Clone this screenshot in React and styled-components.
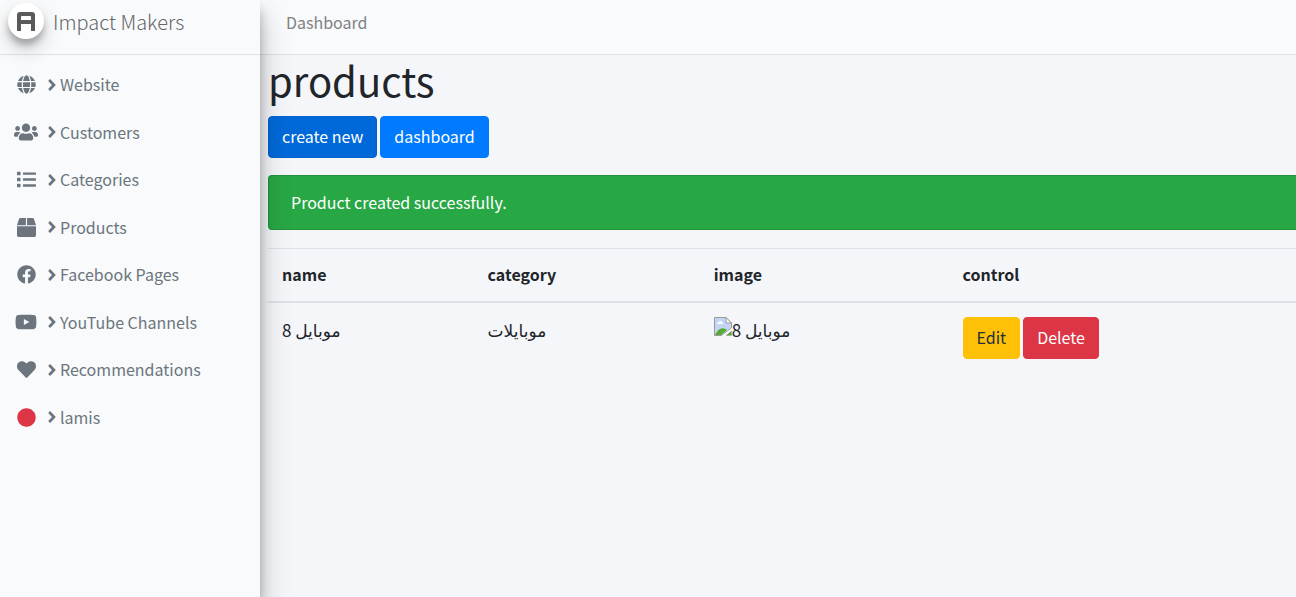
import React from "react";
import styled, { createGlobalStyle } from "styled-components";
import {
  FaGlobe,
  FaUsers,
  FaList,
  FaBox,
  FaFacebook,
  FaYoutube,
  FaHeart,
  FaCircle,
  FaAngleRight,
} from "react-icons/fa";

const GlobalStyle = createGlobalStyle`
  *, *::before, *::after { box-sizing: border-box; }
  body {
    margin: 0;
    background: #f4f6f9;
    color: #212529;
    font-family: "Noto Sans CJK SC", "Noto Sans", "DejaVu Sans", sans-serif;
    font-size: 16px;
    line-height: 27px;
  }
`;

const Layout = styled.div`
  display: flex;
  min-height: 100vh;
  overflow: hidden;
`;

const Sidebar = styled.aside`
  position: relative;
  z-index: 1;
  flex: 0 0 260px;
  background: #f8fafc;
  box-shadow: 0 14px 28px rgba(0, 0, 0, 0.25), 0 10px 10px rgba(0, 0, 0, 0.22);
`;

const Brand = styled.a`
  display: flex;
  align-items: center;
  gap: 9px;
  height: 55px;
  padding: 0 8px 12px;
  border-bottom: 1px solid #dee2e6;
  color: #666;
  font-size: 20px;
  font-weight: 300;
  text-decoration: none;
`;

const LogoDisc = styled.span`
  display: flex;
  align-items: center;
  justify-content: center;
  width: 36px;
  height: 36px;
  border-radius: 50%;
  background: #fff;
  box-shadow: 0 10px 20px rgba(0, 0, 0, 0.19), 0 6px 6px rgba(0, 0, 0, 0.23);
`;

const NavList = styled.ul`
  display: grid;
  grid-auto-rows: 1fr;
  min-height: 380px;
  margin: 6px 0 0;
  padding: 0;
  list-style: none;
`;

const NavLink = styled.a`
  display: flex;
  align-items: center;
  height: 100%;
  padding: 0 12px;
  color: #6c757d;
  text-decoration: none;
`;

const NavIcon = styled.span`
  display: flex;
  justify-content: center;
  width: 28px;
  margin-right: 6px;
  color: ${(p) => p.$color || "inherit"};
  font-size: ${(p) => p.$size}px;
`;

const Angle = styled(FaAngleRight)`
  width: 12px;
  height: 18px;
  margin-right: 2px;
`;

const Content = styled.div`
  flex: 1;
  min-width: 0;
`;

const Topbar = styled.header`
  height: 55px;
  padding: 9px 26px;
  border-bottom: 1px solid #dee2e6;
  background: #f8fafc;
`;

const TopLink = styled.a`
  color: #808182;
  text-decoration: none;
`;

const Main = styled.main`
  padding-left: 8px;
`;

const Title = styled.h1`
  margin: 0 0 11px;
  font-size: 40px;
  font-weight: 400;
  line-height: 50px;
`;

const ButtonRow = styled.div`
  display: flex;
  gap: 3px;
`;

const tones = {
  pressed: { bg: "#0069d9", line: "#0062cc", text: "#fff" },
  primary: { bg: "#007bff", line: "#007bff", text: "#fff" },
  warning: { bg: "#ffc107", line: "#ffc107", text: "#1f2d3d" },
  danger: { bg: "#dc3545", line: "#dc3545", text: "#fff" },
};

const Button = styled.button`
  padding: 6px 13px 7px;
  border: 1px solid ${(p) => tones[p.$tone].line};
  border-radius: 4px;
  background: ${(p) => tones[p.$tone].bg};
  color: ${(p) => tones[p.$tone].text};
  font: inherit;
`;

const Alert = styled.div`
  margin: 17px 0 18px;
  padding: 13px 22px;
  border: 1px solid #23923d;
  border-right: 0;
  border-radius: 4px 0 0 4px;
  background: #28a745;
  color: #fff;
`;

const Table = styled.table`
  width: 100%;
  border-collapse: collapse;
  table-layout: fixed;
`;

const HeadCell = styled.th`
  width: ${(p) => p.$width};
  padding: 12px 14px 13px;
  border-top: 1px solid #dee2e6;
  border-bottom: 2px solid #dee2e6;
  font-weight: 700;
  text-align: left;
`;

const Cell = styled.td`
  padding: 14px;
  vertical-align: top;
`;

const ArabicText = styled.span`
  font-size: 17px;
  line-height: 25px;
`;

const MissingImage = styled.span`
  display: flex;
  align-items: flex-start;
`;

function Logo() {
  return (
    <svg width="18" height="19" viewBox="0 0 18 19" aria-hidden="true">
      <path
        fill="#5a5a5a"
        fillRule="evenodd"
        d="M3 0H15Q18 0 18 3V19H14V12H4V19H0V3Q0 0 3 0ZM5 4Q4 4 4 5V8H14V5Q14 4 13 4Z"
      />
    </svg>
  );
}

function BrokenPicture() {
  return (
    <svg width="18" height="19" viewBox="0 0 18 19" aria-hidden="true">
      <path d="M.5 .5H12L17.5 6V11L7.5 18.5H.5Z" fill="#c3d5f5" stroke="#9a9a9a" />
      <path d="M3 7C3 5 5 5 6 4C8 4 9 6 9 7Z" fill="#fff" />
      <path d="M1 18C4 12 8 9 13 13L7 18Z" fill="#55a936" />
      <path d="M12 .5V6H17.5Z" fill="#fff" stroke="#9a9a9a" />
      <path d="M8 19L18 11V13L11 19Z" fill="#fff" />
      <path d="M12 18.5L17.5 14V18.5Z" fill="#55a936" stroke="#9a9a9a" strokeWidth=".5" />
    </svg>
  );
}

const links = [
  { label: "Website", icon: FaGlobe },
  { label: "Customers", icon: FaUsers, size: 24 },
  { label: "Categories", icon: FaList },
  { label: "Products", icon: FaBox },
  { label: "Facebook Pages", icon: FaFacebook },
  { label: "YouTube Channels", icon: FaYoutube, size: 22 },
  { label: "Recommendations", icon: FaHeart },
  { label: "lamis", icon: FaCircle, color: "#dc3545" },
];

const columns = [
  { label: "name", width: "20%" },
  { label: "category", width: "22%" },
  { label: "image", width: "24.2%" },
  { label: "control", width: "auto" },
];

const products = [{ name: "موبايل 8", category: "موبايلات" }];

export default function App() {
  return (
    <>
      <GlobalStyle />
      <Layout>
        <Sidebar>
          <Brand href="#">
            <LogoDisc>
              <Logo />
            </LogoDisc>
            Impact Makers
          </Brand>
          <nav>
            <NavList>
              {links.map(({ label, icon: Icon, color, size = 19 }) => (
                <li key={label}>
                  <NavLink href="#">
                    <NavIcon $color={color} $size={size}>
                      <Icon />
                    </NavIcon>
                    <Angle />
                    {label}
                  </NavLink>
                </li>
              ))}
            </NavList>
          </nav>
        </Sidebar>
        <Content>
          <Topbar>
            <TopLink href="#">Dashboard</TopLink>
          </Topbar>
          <Main>
            <Title>products</Title>
            <ButtonRow>
              <Button $tone="pressed">create new</Button>
              <Button $tone="primary">dashboard</Button>
            </ButtonRow>
            <Alert role="alert">Product created successfully.</Alert>
            <Table>
              <thead>
                <tr>
                  {columns.map((c) => (
                    <HeadCell key={c.label} $width={c.width}>
                      {c.label}
                    </HeadCell>
                  ))}
                </tr>
              </thead>
              <tbody>
                {products.map((p) => (
                  <tr key={p.name}>
                    <Cell>
                      <ArabicText>{p.name}</ArabicText>
                    </Cell>
                    <Cell>
                      <ArabicText>{p.category}</ArabicText>
                    </Cell>
                    <Cell>
                      <MissingImage>
                        <BrokenPicture />
                        <ArabicText>{p.name}</ArabicText>
                      </MissingImage>
                    </Cell>
                    <Cell>
                      <ButtonRow>
                        <Button $tone="warning">Edit</Button>
                        <Button $tone="danger">Delete</Button>
                      </ButtonRow>
                    </Cell>
                  </tr>
                ))}
              </tbody>
            </Table>
          </Main>
        </Content>
      </Layout>
    </>
  );
}
